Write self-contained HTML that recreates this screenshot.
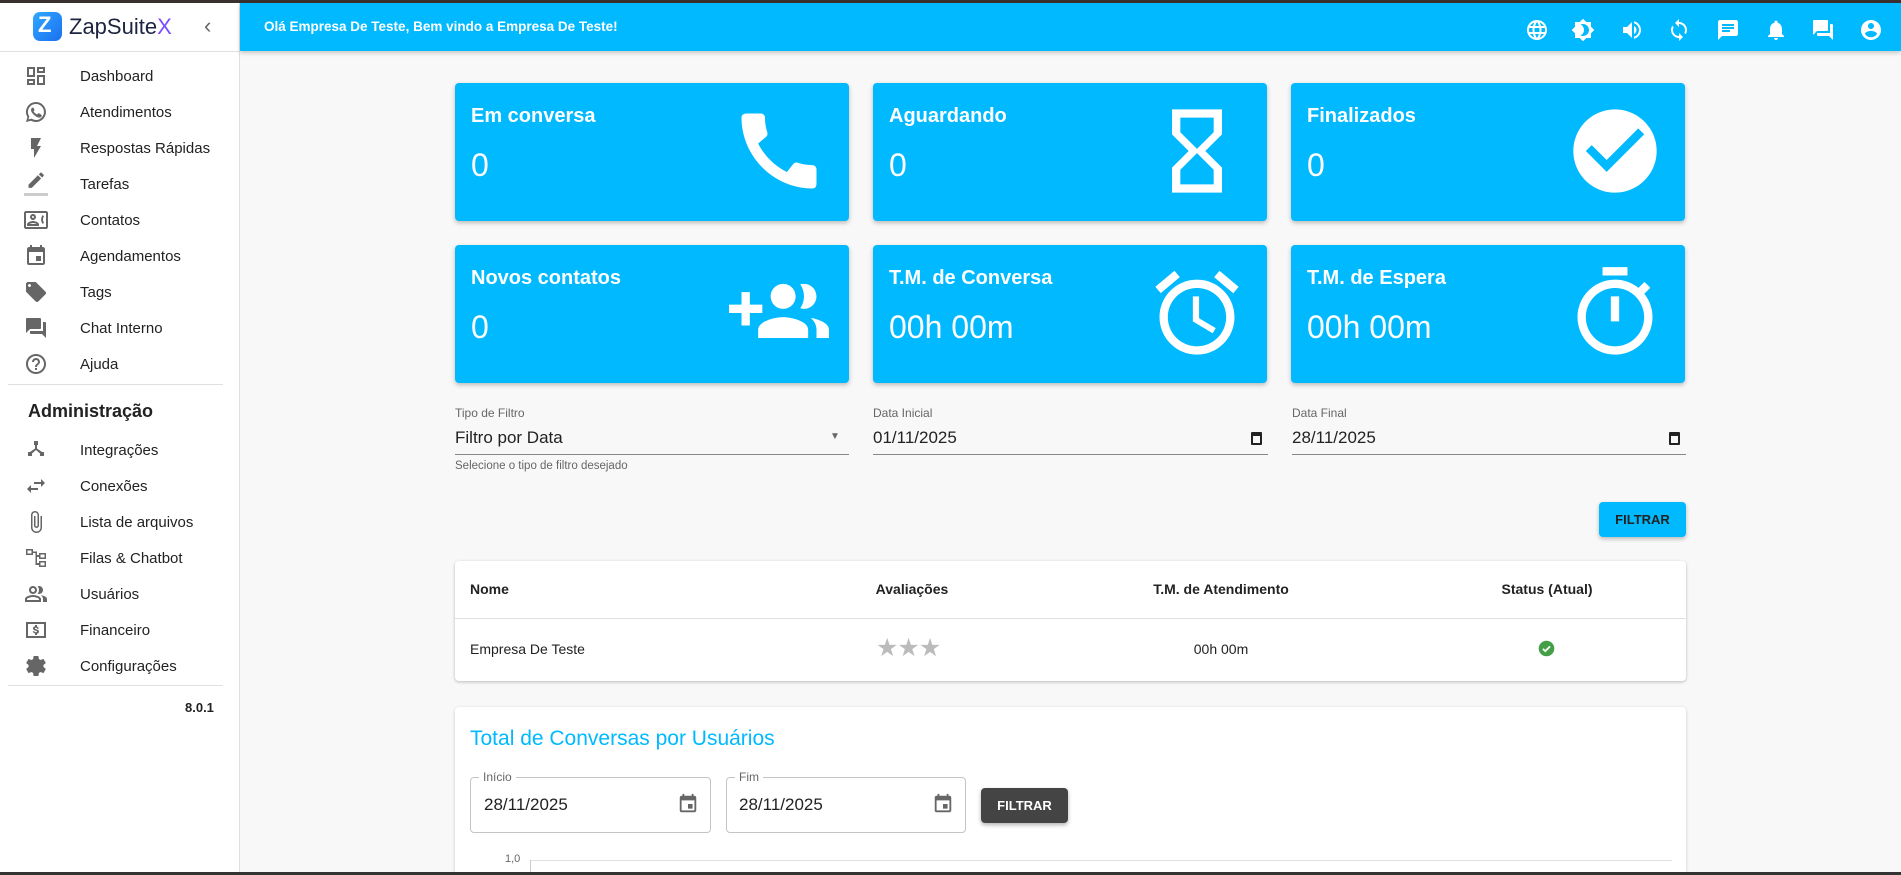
<!DOCTYPE html>
<html style="width:1901px;height:875px;overflow:hidden"><head><meta charset="utf-8"><style>
*{box-sizing:border-box;margin:0;padding:0}
body{width:1901px;height:875px;overflow:hidden;background:#f8f8f8;font-family:"Liberation Sans",Arial,sans-serif;position:relative;color:#222}
.abs{position:absolute}
#topline{left:0;top:0;width:1901px;height:3px;background:#3b3030}
#botline{left:0;top:872px;width:1901px;height:3px;background:#333}
#side{left:0;top:3px;width:240px;height:869px;background:#fff;border-right:1px solid #e0e0e0}
#hdr{left:240px;top:3px;width:1661px;height:48px;background:#00b9ff;box-shadow:0 2px 4px rgba(0,0,0,.2)}
.nav{position:absolute;left:0;width:240px;height:36px;display:flex;align-items:center;font-size:15px;color:#222}
.nav svg{position:absolute;left:24px;width:24px;height:24px;fill:#666}
.nav span{position:absolute;left:80px}
.card{position:absolute;width:394px;height:138px;background:#00b9ff;border-radius:4px;box-shadow:0 2px 5px rgba(0,0,0,.25);color:#fff}
.card .t{position:absolute;left:16px;top:22px;font-size:20px;font-weight:bold}
.card .v{position:absolute;left:16px;top:64px;font-size:32px}
.card svg{position:absolute;right:20px;top:18px;width:100px;height:100px;fill:#fff}
.lbl{position:absolute;font-size:12px;color:#666}
.fld{position:absolute;font-size:17px;color:#222}
.ul{position:absolute;height:1px;background:#888}
.hi{position:absolute;width:24px;height:24px;fill:#fff;top:15px}
</style></head><body>
<div id="topline" class="abs"></div>
<div id="side" class="abs">
  <div class="abs" style="left:33px;top:9px;width:29px;height:29px;border-radius:7px;background:linear-gradient(135deg,#2fa8ff,#1c6ff0)"></div>
  <div class="abs" style="left:38px;top:9px;color:#fff;font-weight:bold;font-size:22px">Z</div>
  <div class="abs" style="left:69px;top:11px;font-size:22px;color:#1d2340;font-weight:500">ZapSuite<span style="color:#7b4dff">X</span></div>
  <div class="abs" style="left:204px;top:10px;font-size:22px;color:#666">‹</div>
  <div class="abs" style="left:0;top:48px;width:239px;height:1px;background:#e0e0e0"></div>
  <div class="nav" style="top:55px"><svg viewBox="0 0 24 24"><path d="M19 5v2h-4V5h4M9 5v6H5V5h4m10 8v6h-4v-6h4M9 17v2H5v-2h4M21 3h-8v6h8V3zM11 3H3v10h8V3zm10 8h-8v10h8V11zm-10 4H3v6h8v-6z"/></svg><span>Dashboard</span></div>
  <div class="nav" style="top:91px"><svg viewBox="0 0 24 24"><path d="M12 2a10 10 0 0 0-8.6 15.1L2 22l5-1.3A10 10 0 1 0 12 2zm0 18a8 8 0 0 1-4.2-1.2l-.3-.2-3 .8.8-2.9-.2-.3A8 8 0 1 1 12 20zm4.4-6c-.2-.1-1.4-.7-1.7-.8-.2-.1-.4-.1-.5.1l-.8 1c-.1.2-.3.2-.5.1a6.6 6.6 0 0 1-3.3-2.9c-.2-.4.3-.4.8-1.3.1-.2 0-.3 0-.4l-.8-1.8c-.2-.5-.4-.4-.5-.4h-.5a1 1 0 0 0-.7.3 3 3 0 0 0-.9 2.2 5.2 5.2 0 0 0 1.1 2.8 12 12 0 0 0 4.6 4c1.7.7 2.4.8 3.200.7.5-.1 1.4-.6 1.7-1.2.2-.6.2-1.1.1-1.2l-.4-.3z"/></svg><span>Atendimentos</span></div>
  <div class="nav" style="top:127px"><svg viewBox="0 0 24 24"><path d="M7 2v11h3v9l7-12h-4l4-8z"/></svg><span>Respostas Rápidas</span></div>
  <div class="nav" style="top:163px"><svg viewBox="0 0 24 24"><path d="M3 17.25V21h3.75L17.81 9.94l-3.75-3.75L3 17.25zM20.71 7.04a1 1 0 0 0 0-1.41l-2.34-2.34a1 1 0 0 0-1.41 0l-1.83 1.830 3.75 3.75 1.83-1.83z" transform="translate(2,-2) scale(.85)"/><rect x="0" y="21" width="24" height="3" fill="#ccc"/></svg><span>Tarefas</span></div>
  <div class="nav" style="top:199px"><svg viewBox="0 0 24 24"><path d="M22 3H2C.9 3 0 3.9 0 5v14c0 1.1.9 2 2 2h20c1.1 0 1.99-.9 1.99-2L24 5c0-1.1-.9-2-2-2zm0 16H2V5h20v14zM9 12c1.65 0 3-1.35 3-3S10.65 6 9 6 6 7.35 6 9s1.35 3 3 3zm0-4c.55 0 1 .45 1 1s-.45 1-1 1-1-.45-1-1 .45-1 1-1zm6 8.59c0-2.5-3.97-3.58-6-3.58s-6 1.07-6 3.58V18h12v-1.41zM5.48 16c.74-.5 2.22-1 3.52-1s2.770.49 3.52 1H5.48zM19 11.5c0-1.2.4-2.3 1-3.2L18.7 7A8 8 0 0 0 17 11.5a8 8 0 0 0 1.7 4.5l1.3-1.3c-.6-.9-1-2-1-3.2z"/></svg><span>Contatos</span></div>
  <div class="nav" style="top:235px"><svg viewBox="0 0 24 24"><path d="M17 12h-5v5h5v-5zM16 1v2H8V1H6v2H5c-1.11 0-1.99.9-1.99 2L3 19a2 2 0 0 0 2 2h14c1.1 0 2-.9 2-2V5c0-1.1-.9-2-2-2h-1V1h-2zm3 18H5V8h14v11z"/></svg><span>Agendamentos</span></div>
  <div class="nav" style="top:271px"><svg viewBox="0 0 24 24"><path d="M21.41 11.58l-9-9C12.05 2.22 11.55 2 11 2H4c-1.1 0-2 .9-2 2v7c0 .55.22 1.05.59 1.42l9 9c.36.36.86.58 1.41.58.55 0 1.050-.22 1.41-.59l7-7c.37-.36.59-.86.59-1.41 0-.55-.23-1.06-.59-1.42zM5.5 7C4.67 7 4 6.33 4 5.5S4.67 4 5.5 4 7 4.67 7 5.5 6.33 7 5.5 7z"/></svg><span>Tags</span></div>
  <div class="nav" style="top:307px"><svg viewBox="0 0 24 24"><path d="M21 6h-2v9H6v2c0 .55.45 1 1 1h11l4 4V7c0-.55-.45-1-1-1zm-4 6V3c0-.55-.45-1-1-1H3c-.55 0-1 .45-1 1v14l4-4h10c.55 0 1-.45 1-1z"/></svg><span>Chat Interno</span></div>
  <div class="nav" style="top:343px"><svg viewBox="0 0 24 24"><path d="M11 18h2v-2h-2v2zm1-16C6.48 2 2 6.48 2 12s4.48 10 10 10 10-4.48 10-10S17.52 2 12 2zm0 18c-4.41 0-8-3.59-8-8s3.59-8 8-8 8 3.59 8 8-3.59 8-8 8zm0-14c-2.21 0-4 1.79-4 4h2c0-1.1.9-2 2-2s2 .9 2 2c0 2-3 1.75-3 5h2c0-2.25 3-2.5 3-5 0-2.21-1.79-4-4-4z"/></svg><span>Ajuda</span></div>
  <div class="abs" style="left:8px;top:381px;width:215px;height:1px;background:#e0e0e0"></div>
  <div class="abs" style="left:28px;top:398px;font-size:18px;font-weight:bold;color:#222">Administração</div>
  <div class="nav" style="top:429px"><svg viewBox="0 0 24 24"><path d="M10 3h4v4h-1v3.5l5 3.5h2v4h-4v-2.5L12 12l-4 3.5V18H4v-4h2l5-3.5V7h-1z"/></svg><span>Integrações</span></div>
  <div class="nav" style="top:465px"><svg viewBox="0 0 24 24"><path d="M6.99 11L3 15l3.99 4v-3H14v-2H6.99v-3zM21 9l-3.99-4v3H10v2h7.01v3L21 9z"/></svg><span>Conexões</span></div>
  <div class="nav" style="top:501px"><svg viewBox="0 0 24 24"><path d="M16.5 6v11.5c0 2.21-1.79 4-4 4s-4-1.79-4-4V5a2.5 2.5 0 0 1 5 0v10.5c0 .55-.45 1-1 1s-1-.45-1-1V6H10v9.5a2.5 2.5 0 0 0 5 0V5c0-2.21-1.79-4-4-4S7 2.79 7 5v12.5c0 3.04 2.46 5.5 5.5 5.5s5.5-2.46 5.5-5.5V6h-1.5z"/></svg><span>Lista de arquivos</span></div>
  <div class="nav" style="top:537px"><svg viewBox="0 0 24 24"><path d="M2 3h7v6H2zM3.5 4.5v3h4v-3zM9 5.5h4V9h2V7h7v6h-7v-2h-2v6h2v-2h7v6h-7v-2h-3.5V7H9zM16.5 8.5v3h4v-3zm0 8v3h4v-3z"/></svg><span>Filas &amp; Chatbot</span></div>
  <div class="nav" style="top:573px"><svg viewBox="0 0 24 24"><path d="M16.67 13.13C18.04 14.06 19 15.32 19 17v3h4v-3c0-2.18-3.57-3.47-6.33-3.87zM15 12c2.21 0 4-1.79 4-4s-1.79-4-4-4c-.47 0-.91.1-1.33.24a5.98 5.98 0 0 1 0 7.52c.42.14.86.24 1.33.24zm-6 0c2.21 0 4-1.79 4-4s-1.79-4-4-4-4 1.79-4 4 1.79 4 4 4zm0-6c1.1 0 2 .9 2 2s-.9 2-2 2-2-.9-2-2 .9-2 2-2zm0 7c-2.67 0-8 1.34-8 4v3h16v-3c0-2.66-5.33-4-8-4zm6 5H3v-.99C3.2 16.29 6.3 15 9 15s5.8 1.29 6 2v1z"/></svg><span>Usuários</span></div>
  <div class="nav" style="top:609px"><svg viewBox="0 0 24 24"><path d="M2 4h20v16H2zm2 2v12h16V6zm9 1h-2v1.2c-1.2.3-2 1.1-2 2.2 0 1.4 1.2 1.9 2.8 2.3 1.3.3 1.2.6 1.2.8 0 .4-.5.7-1.2.7-.8 0-1.3-.3-1.4-1H8.8c.1 1.2 1 1.9 2.2 2.1V17h2v-1.2c1.2-.3 2-1 2-2.2 0-1.6-1.4-2-2.8-2.4-1-.3-1.2-.5-1.2-.8s.4-.6 1-.6c.8 0 1.1.4 1.1.9h1.6c0-1-.7-1.9-1.7-2.2z"/></svg><span>Financeiro</span></div>
  <div class="nav" style="top:645px"><svg viewBox="0 0 24 24"><path d="M19.43 12.98c.04-.32.07-.64.07-.98 0-.34-.03-.66-.07-.98l2.11-1.65c.19-.15.24-.42.12-.64l-2-3.46a.5.5 0 0 0-.61-.22l-2.49 1a7.3 7.3 0 0 0-1.69-.98l-.38-2.65A.49.49 0 0 0 14 2h-4c-.25 0-.46.18-.49.42l-.38 2.65c-.61.25-1.17.59-1.69.98l-2.49-1a.57.57 0 0 0-.18-.03.5.5 0 0 0-.43.25l-2 3.46c-.13.22-.07.49.12.64l2.11 1.65c-.04.32-.07.65-.07.98s.03.66.07.98l-2.11 1.65c-.19.15-.24.42-.12.64l2 3.46a.5.5 0 0 0 .61.22l2.49-1c.52.4 1.08.73 1.69.98l.38 2.65c.03.24.24.42.49.42h4c.25 0 .46-.18.49-.42l.38-2.65c.61-.25 1.17-.59 1.69-.98l2.49 1a.5.5 0 0 0 .61-.22l2-3.46c.12-.22.07-.49-.12-.64l-2.11-1.65zM12 8c-2.21 0-4 1.790-4 4s1.79 4 4 4 4-1.79 4-4-1.79-4-4-4zm0 6c-1.1 0-2-.9-2-2s.9-2 2-2 2 .9 2 2-.9 2-2 2z"/></svg><span>Configurações</span></div>
  <div class="abs" style="left:8px;top:682px;width:215px;height:1px;background:#e0e0e0"></div>
  <div class="abs" style="left:185px;top:697px;font-size:13px;font-weight:bold;color:#222">8.0.1</div>
</div>
<div id="hdr" class="abs">
  <div class="abs" style="left:24px;top:16px;font-size:13.5px;font-weight:bold;color:#fff">Olá Empresa De Teste, Bem vindo a Empresa De Teste!</div>
  <svg class="hi" style="left:1285px" viewBox="0 0 24 24"><path d="M11.99 2C6.47 2 2 6.48 2 12s4.47 10 9.99 10C17.52 22 22 17.52 22 12S17.52 2 11.99 2zm6.93 6h-2.950a15.65 15.65 0 0 0-1.38-3.56A8.03 8.03 0 0 1 18.92 8zM12 4.04c.83 1.2 1.48 2.53 1.91 3.96h-3.82c.43-1.43 1.08-2.76 1.91-3.96zM4.26 14C4.1 13.36 4 12.69 4 12s.1-1.36.26-2h3.38c-.08.66-.14 1.32-.14 2s.06 1.34.14 2H4.26zm.82 2h2.95c.32 1.25.78 2.45 1.38 3.56A7.99 7.99 0 0 1 5.08 16zm2.95-8H5.08a7.99 7.99 0 0 1 4.33-3.56A15.65 15.65 0 0 0 8.03 8zM12 19.96c-.83-1.2-1.48-2.53-1.91-3.96h3.82c-.43 1.43-1.08 2.76-1.91 3.96zM14.34 14H9.66c-.09-.66-.16-1.32-.16-2s.07-1.35.16-2h4.68c.09.65.16 1.32.16 2s-.07 1.34-.16 2zm.25 5.56c.6-1.11 1.06-2.31 1.38-3.56h2.95a8.03 8.03 0 0 1-4.33 3.56zM16.36 14c.08-.66.14-1.32.14-2s-.06-1.34-.14-2h3.38c.16.64.26 1.31.26 2s-.1 1.36-.26 2h-3.38z"/></svg>
  <svg class="hi" style="left:1331px" viewBox="0 0 24 24"><path d="M20 8.69V4h-4.69L12 .69 8.69 4H4v4.69L.69 12 4 15.31V20h4.69L12 23.31 15.31 20H20v-4.69L23.31 12 20 8.69zM12 18c-.89 0-1.74-.2-2.5-.55C11.56 16.5 13 14.42 13 12s-1.44-4.5-3.5-5.45A5.9 5.9 0 0 1 12 6c3.31 0 6 2.69 6 6s-2.69 6-6 6z"/></svg>
  <svg class="hi" style="left:1380px" viewBox="0 0 24 24"><path d="M3 9v6h4l5 5V4L7 9H3zm13.5 3A4.5 4.5 0 0 0 14 7.97v8.05c1.48-.73 2.5-2.25 2.5-4.02zM14 3.23v2.06c2.89.86 5 3.54 5 6.71s-2.11 5.85-5 6.71v2.06c4.01-.91 7-4.49 7-8.77s-2.99-7.86-7-8.77z"/></svg>
  <svg class="hi" style="left:1427px" viewBox="0 0 24 24"><path d="M12 4V1L8 5l4 4V6c3.31 0 6 2.69 6 6 0 1.01-.25 1.97-.7 2.8l1.46 1.46A7.93 7.93 0 0 0 20 12c0-4.42-3.58-8-8-8zm0 14c-3.31 0-6-2.69-6-6 0-1.01.25-1.97.7-2.8L5.24 7.74A7.93 7.93 0 0 0 4 12c0 4.42 3.58 8 8 8v3l4-4-4-4v3z"/></svg>
  <svg class="hi" style="left:1476px" viewBox="0 0 24 24"><path d="M20 2H4c-1.1 0-1.99.9-1.99 2L2 22l4-4h14c1.1 0 2-.9 2-2V4c0-1.1-.9-2-2-2zM6 9h12v2H6V9zm8 5H6v-2h8v2zm4-6H6V6h12v2z"/></svg>
  <svg class="hi" style="left:1524px" viewBox="0 0 24 24"><path d="M12 22c1.1 0 2-.9 2-2h-4c0 1.1.89 2 2 2zm6-6v-5c0-3.07-1.64-5.64-4.5-6.32V4c0-.83-.67-1.5-1.5-1.5s-1.5.67-1.5 1.5v.68C7.63 5.36 6 7.92 6 11v5l-2 2v1h16v-1l-2-2z"/></svg>
  <svg class="hi" style="left:1571px" viewBox="0 0 24 24"><path d="M21 6h-2v9H6v2c0 .55.45 1 1 1h11l4 4V7c0-.55-.45-1-1-1zm-4 6V3c0-.55-.45-1-1-1H3c-.55 0-1 .45-1 1v14l4-4h10c.55 0 1-.45 1-1z"/></svg>
  <svg class="hi" style="left:1619px" viewBox="0 0 24 24"><path d="M12 2C6.48 2 2 6.48 2 12s4.48 10 10 10 10-4.48 10-10S17.52 2 12 2zm0 3c1.66 0 3 1.34 3 3s-1.34 3-3 3-3-1.34-3-3 1.34-3 3-3zm0 14.2a7.2 7.2 0 0 1-6-3.22c.03-1.99 4-3.08 6-3.08 1.99 0 5.97 1.09 6 3.08a7.2 7.2 0 0 1-6 3.22z"/></svg>
</div>

<div class="card" style="left:455px;top:83px"><div class="t">Em conversa</div><div class="v">0</div><svg viewBox="0 0 24 24"><path d="M20.01 15.38c-1.23 0-2.42-.2-3.53-.56-.35-.12-.74-.03-1.01.24l-1.57 1.97c-2.83-1.35-5.48-3.9-6.89-6.83l1.95-1.66c.27-.28.35-.67.24-1.02-.37-1.11-.56-2.3-.56-3.53 0-.54-.45-.99-.99-.99H4.19C3.65 3 3 3.24 3 3.99 3 13.28 10.73 21 20.01 21c.71 0 .99-.63.99-1.18v-3.45c0-.54-.45-.99-.99-.99z"/></svg></div>
<div class="card" style="left:873px;top:83px"><div class="t">Aguardando</div><div class="v">0</div><svg viewBox="0 0 24 24"><path d="M6 2v6h.01L6 8.01 10 12l-4 4 .01.01H6V22h12v-5.99h-.01L18 16l-4-4 4-3.99-.01-.01H18V2H6zm10 14.5V20H8v-3.5l4-4 4 4zm-4-5l-4-4V4h8v3.5l-4 4z"/></svg></div>
<div class="card" style="left:1291px;top:83px"><div class="t">Finalizados</div><div class="v">0</div><svg viewBox="0 0 24 24"><path d="M12 2C6.48 2 2 6.48 2 12s4.48 10 10 10 10-4.48 10-10S17.52 2 12 2zm-2 15l-5-5 1.41-1.41L10 14.17l7.59-7.59L19 8l-9 9z"/></svg></div>
<div class="card" style="left:455px;top:245px"><div class="t">Novos contatos</div><div class="v">0</div><svg viewBox="0 0 24 24"><path d="M8 10H5V7H3v3H0v2h3v3h2v-3h3v-2zm10 1c1.66 0 2.99-1.34 2.99-3S19.66 5 18 5c-.32 0-.63.05-.91.14.57.81.9 1.79.9 2.86s-.34 2.04-.9 2.86c.28.09.59.14.91.14zm-5 0c1.66 0 2.99-1.34 2.99-3S14.66 5 13 5c-1.66 0-3 1.34-3 3s1.34 3 3 3zm6.62 2.16c.83.73 1.38 1.66 1.38 2.84v2h3v-2c0-1.54-2.37-2.49-4.38-2.84zM13 13c-2 0-6 1-6 3v2h12v-2c0-2-4-3-6-3z"/></svg></div>
<div class="card" style="left:873px;top:245px"><div class="t">T.M. de Conversa</div><div class="v">00h 00m</div><svg viewBox="0 0 24 24"><path d="M22 5.72l-4.6-3.86-1.29 1.53 4.6 3.86L22 5.72zM7.88 3.39L6.6 1.86 2 5.71l1.29 1.53 4.59-3.85zM12.5 8H11v6l4.75 2.85.75-1.23-4-2.37V8zM12 4c-4.97 0-9 4.03-9 9s4.02 9 9 9c4.97 0 9-4.03 9-9s-4.03-9-9-9zm0 16c-3.87 0-7-3.13-7-7s3.13-7 7-7 7 3.13 7 7-3.13 7-7 7z"/></svg></div>
<div class="card" style="left:1291px;top:245px"><div class="t">T.M. de Espera</div><div class="v">00h 00m</div><svg viewBox="0 0 24 24"><path d="M15 1H9v2h6V1zm-4 13h2V8h-2v6zm8.03-6.61l1.42-1.42c-.43-.51-.9-.99-1.41-1.41l-1.42 1.42C16.07 4.74 14.12 4 12 4c-4.97 0-9 4.03-9 9s4.02 9 9 9 9-4.03 9-9c0-2.12-.74-4.07-1.97-5.61zM12 20c-3.87 0-7-3.13-7-7s3.13-7 7-7 7 3.13 7 7-3.13 7-7 7z"/></svg></div>

<div class="lbl" style="left:455px;top:406px">Tipo de Filtro</div>
<div class="fld" style="left:455px;top:428px">Filtro por Data</div>
<div class="abs" style="left:830px;top:431px;font-size:10px;color:#666">▼</div>
<div class="ul" style="left:455px;top:454px;width:394px"></div>
<div class="lbl" style="left:455px;top:460px;font-size:11.5px">Selecione o tipo de filtro desejado</div>

<div class="lbl" style="left:873px;top:406px">Data Inicial</div>
<div class="fld" style="left:873px;top:428px">01/11/2025</div>
<div class="abs" style="left:1251px;top:432px;width:11px;height:13px;border:2px solid #222;border-top-width:4px;border-radius:1px"></div>
<div class="ul" style="left:873px;top:454px;width:395px"></div>

<div class="lbl" style="left:1292px;top:406px">Data Final</div>
<div class="fld" style="left:1292px;top:428px">28/11/2025</div>
<div class="abs" style="left:1669px;top:432px;width:11px;height:13px;border:2px solid #222;border-top-width:4px;border-radius:1px"></div>
<div class="ul" style="left:1292px;top:454px;width:394px"></div>

<div class="abs" style="left:1599px;top:502px;width:87px;height:35px;background:#00b9ff;border-radius:4px;box-shadow:0 2px 4px rgba(0,0,0,.25);font-size:13px;font-weight:bold;color:#222;text-align:center;line-height:35px">FILTRAR</div>

<div class="abs" style="left:455px;top:561px;width:1231px;height:120px;background:#fff;border-radius:4px;box-shadow:0 1px 3px rgba(0,0,0,.25)">
  <div class="abs" style="left:15px;top:20px;font-size:14px;font-weight:bold">Nome</div>
  <div class="abs" style="left:352px;top:20px;font-size:14px;font-weight:bold;width:210px;text-align:center">Avaliações</div>
  <div class="abs" style="left:616px;top:20px;font-size:14px;font-weight:bold;width:300px;text-align:center">T.M. de Atendimento</div>
  <div class="abs" style="left:942px;top:20px;font-size:14px;font-weight:bold;width:300px;text-align:center">Status (Atual)</div>
  <div class="abs" style="left:0;top:57px;width:1231px;height:1px;background:#e0e0e0"></div>
  <div class="abs" style="left:15px;top:80px;font-size:14px">Empresa De Teste</div>
  <div class="abs" style="left:421px;top:72px;font-size:25px;color:#bbb;letter-spacing:-1px">★★★</div>
  <div class="abs" style="left:616px;top:80px;font-size:14px;width:300px;text-align:center">00h 00m</div>
  <svg class="abs" style="left:1083px;top:79px;width:17px;height:17px" viewBox="0 0 24 24"><circle cx="12" cy="12" r="11" fill="#43a047"/><path d="M7 12.5l3.2 3.2L17 9" stroke="#fff" stroke-width="2.6" fill="none"/></svg>
</div>

<div class="abs" style="left:455px;top:707px;width:1231px;height:165px;background:#fff;border-radius:4px 4px 0 0;box-shadow:0 1px 3px rgba(0,0,0,.2);overflow:hidden">
  <div class="abs" style="left:15px;top:20px;font-size:21px;color:#00b9ff">Total de Conversas por Usuários</div>
  <div class="abs" style="left:15px;top:70px;width:241px;height:56px;border:1px solid #c4c4c4;border-radius:4px"></div>
  <div class="abs" style="left:24px;top:63px;background:#fff;padding:0 4px;font-size:12px;color:#666">Início</div>
  <div class="abs" style="left:29px;top:88px;font-size:17px">28/11/2025</div>
  <svg class="abs" style="left:222px;top:86px;width:22px;height:22px;fill:#666" viewBox="0 0 24 24"><path d="M17 12h-5v5h5v-5zM16 1v2H8V1H6v2H5c-1.11 0-1.99.9-1.99 2L3 19a2 2 0 0 0 2 2h14c1.1 0 2-.9 2-2V5c0-1.1-.9-2-2-2h-1V1h-2zm3 18H5V8h14v11z"/></svg>
  <div class="abs" style="left:271px;top:70px;width:240px;height:56px;border:1px solid #c4c4c4;border-radius:4px"></div>
  <div class="abs" style="left:280px;top:63px;background:#fff;padding:0 4px;font-size:12px;color:#666">Fim</div>
  <div class="abs" style="left:284px;top:88px;font-size:17px">28/11/2025</div>
  <svg class="abs" style="left:477px;top:86px;width:22px;height:22px;fill:#666" viewBox="0 0 24 24"><path d="M17 12h-5v5h5v-5zM16 1v2H8V1H6v2H5c-1.11 0-1.99.9-1.99 2L3 19a2 2 0 0 0 2 2h14c1.1 0 2-.9 2-2V5c0-1.1-.9-2-2-2h-1V1h-2zm3 18H5V8h14v11z"/></svg>
  <div class="abs" style="left:526px;top:81px;width:87px;height:35px;background:#444;border-radius:4px;box-shadow:0 2px 4px rgba(0,0,0,.3);color:#fff;font-size:13px;font-weight:bold;text-align:center;line-height:35px">FILTRAR</div>
  <div class="abs" style="left:50px;top:146px;font-size:11px;color:#666">1,0</div>
  <div class="abs" style="left:75px;top:153px;width:1142px;height:1px;background:#e0e0e0"></div>
  <div class="abs" style="left:75px;top:153px;width:1px;height:20px;background:#ccc"></div>
</div>
<div id="botline" class="abs"></div>
</body></html>
